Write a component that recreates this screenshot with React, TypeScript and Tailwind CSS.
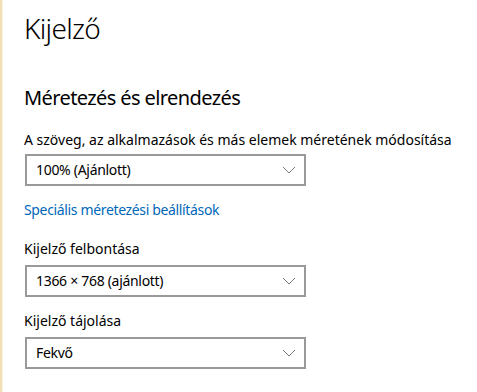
import React from "react";

const Chevron = () => (
  <svg width="14" height="8" viewBox="0 0 14 8" fill="none" className="shrink-0">
    <path d="M1 1l6 6 6-6" stroke="#7a7a7a" strokeWidth="1" />
  </svg>
);

const Select = ({ value }: { value: string }) => (
  <div className="flex items-center justify-between w-[281px] h-[32px] border-2 border-[#999999] pl-[9px] pr-[8px] bg-white">
    <span className="text-[14px] tracking-[-0.3px] text-black leading-none">{value}</span>
    <Chevron />
  </div>
);

export default function App() {
  return (
    <div
      className="flex w-[477px] h-[392px] bg-white overflow-hidden"
      style={{ fontFamily: '"Noto Sans", "Open Sans", sans-serif' }}
    >
      <div className="w-[2px] h-full bg-[#f1dfb6]" />
      <div className="w-[1px] h-full bg-[#fbf4e4]" />
      <div className="flex flex-col pl-[21px] pt-[10px]">
        <h1 className="text-[28px] font-light leading-[36px] tracking-[-0.7px] text-black">Kijelző</h1>

        <h2 className="mt-[38px] text-[20px] leading-[28px] tracking-[-0.6px] text-black">
          Méretezés és elrendezés
        </h2>

        <div className="mt-[18px] text-[14px] leading-[20px] text-black">
          A szöveg, az alkalmazások és más elemek méretének módosítása
        </div>
        <div className="mt-[4px] pl-[1px]">
          <Select value="100% (Ajánlott)" />
        </div>

        <a className="mt-[14px] text-[14px] leading-[20px] tracking-[-0.35px] text-[#0067b8]">
          Speciális méretezési beállítások
        </a>

        <div className="mt-[19px] text-[14px] leading-[20px] text-black">Kijelző felbontása</div>
        <div className="mt-[6px] pl-[1px]">
          <Select value="1366 × 768 (ajánlott)" />
        </div>

        <div className="mt-[14px] text-[14px] leading-[20px] text-black">Kijelző tájolása</div>
        <div className="mt-[6px] pl-[1px]">
          <Select value="Fekvő" />
        </div>
      </div>
    </div>
  );
}
